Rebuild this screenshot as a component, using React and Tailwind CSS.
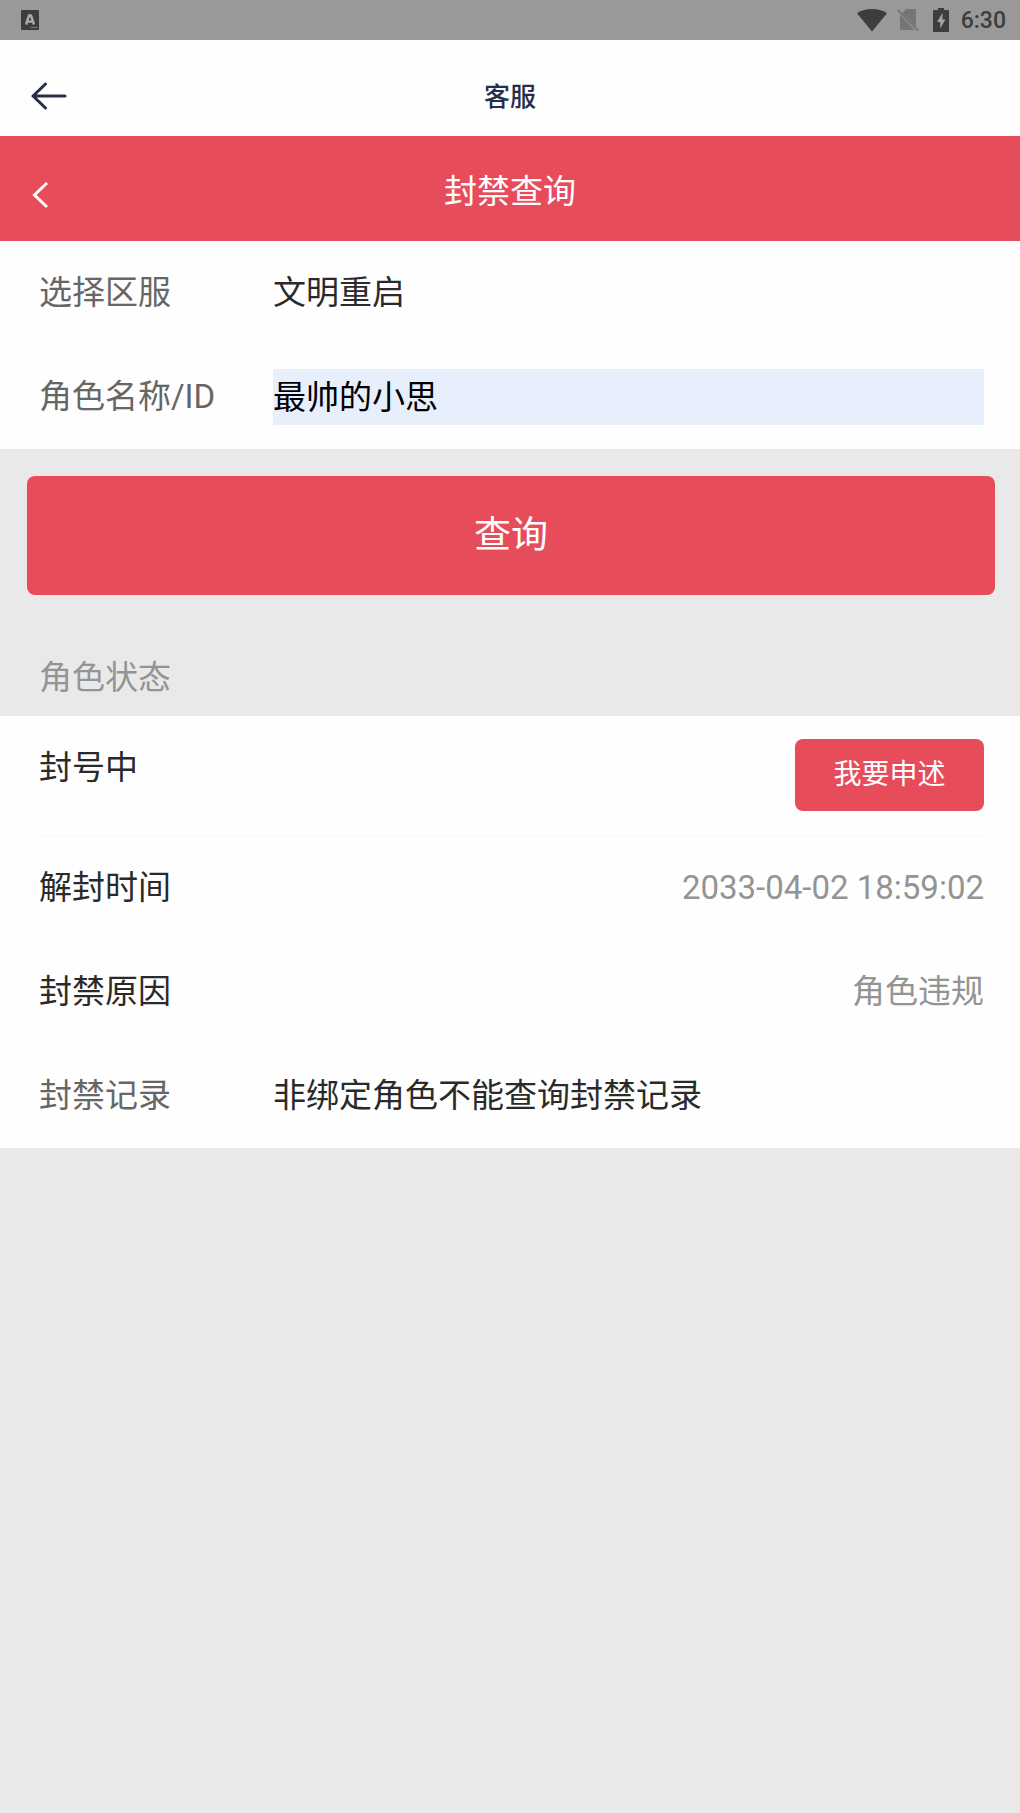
import { useState } from "react";

const baseFont = "font-[Roboto,'Noto_Sans_CJK_SC',sans-serif]";

function StatusBar() {
  return (
    <div className="flex h-10 items-center justify-between bg-[#999999] pr-3.5 pl-[21px] text-[#3d3d3d]">
      <svg width="18" height="20" viewBox="0 0 18 20" aria-hidden="true">
        <rect width="18" height="20" rx="1" fill="currentColor" />
        <path d="M5 14.5 8 5.5h2l3 9M6.2 11.6h5.6" fill="none" stroke="#aaaaaa" strokeWidth="2.4" />
        <path d="M9.5 17.5h7" stroke="#777777" strokeWidth="1" />
      </svg>
      <div className="flex items-center">
        <svg width="30" height="24" viewBox="0 0 30 24" aria-hidden="true">
          <path d="M0 5.2C8.5-.4 21.5-.4 30 5.2L15 23.5Z" fill="currentColor" />
        </svg>
        <svg className="ml-2.5" width="22" height="24" viewBox="0 0 22 24" aria-hidden="true">
          <path d="M9 1h9q1 0 1 1v16.500L5.500 5Z" fill="#757575" />
          <path d="M3 6.500V21q0 1 1 1h13.500Z" fill="#757575" />
          <path d="M1 2 21 22.500" stroke="#757575" strokeWidth="2" />
        </svg>
        <svg className="ml-3.5" width="16" height="24" viewBox="0 0 16 24" aria-hidden="true">
          <path d="M5 0h6v2h4q1 0 1 1v20q0 1-1 1H1q-1 0-1-1V3q0-1 1-1h4Z" fill="currentColor" />
          <path d="M9.5 5 4 14h3.200v6.500L12.500 11.500H9.500Z" fill="#a3a3a3" />
        </svg>
        <span className="ml-3 pt-0.5 text-[23px] leading-9 font-medium">6:30</span>
      </div>
    </div>
  );
}

function AppBar() {
  return (
    <header className="grid h-24 grid-cols-[1fr_auto_1fr] items-center bg-[#fefefe] px-[31px] pt-4">
      <button type="button" aria-label="返回" className="w-9">
        <svg width="36" height="28" viewBox="0 0 36 28" aria-hidden="true">
          <path
            d="M34 14H2M14.500 2 2 14l12.500 12"
            fill="none"
            stroke="#282d49"
            strokeWidth="3"
            strokeLinecap="round"
            strokeLinejoin="round"
          />
        </svg>
      </button>
      <h1 className="pt-0.5 text-[26px] leading-10 font-medium text-[#282d49]">客服</h1>
    </header>
  );
}

function PageTitle() {
  return (
    <div className="grid h-[105px] grid-cols-[1fr_auto_1fr] items-center bg-[#e74c5b] px-[31px] text-white">
      <button type="button" aria-label="后退" className="w-9 pt-3">
        <svg width="20" height="28" viewBox="0 0 20 28" aria-hidden="true">
          <path d="M16 2 3.500 14 16 26" fill="none" stroke="currentColor" strokeWidth="3" />
        </svg>
      </button>
      <h2 className="pt-1.5 text-[33px] leading-[48px]">封禁查询</h2>
    </div>
  );
}

function Row({ label, htmlFor, children }) {
  return (
    <div className="flex h-[104px] items-center">
      <label htmlFor={htmlFor} className="w-[234px] shrink-0 text-[#666666]">
        {label}
      </label>
      {children}
    </div>
  );
}

function StatusRow({ label, value }) {
  return (
    <div className="flex h-[104px] items-center justify-between">
      <span>{label}</span>
      <span className="text-[#949494]">{value}</span>
    </div>
  );
}

export default function App() {
  const [role, setRole] = useState("最帅的小思");

  return (
    <div className={`min-h-screen bg-[#e9e9e9] text-[33px] text-[#2a2a2a] ${baseFont}`}>
      <StatusBar />
      <AppBar />
      <PageTitle />

      <form onSubmit={(e) => e.preventDefault()}>
        <div className="bg-[#fefefe] pr-9 pl-[39px]">
          <Row label="选择区服" htmlFor="server">
            <output id="server">文明重启</output>
          </Row>
          <Row label="角色名称/ID" htmlFor="role">
            <input
              id="role"
              value={role}
              onChange={(e) => setRole(e.target.value)}
              className="h-14 min-w-0 flex-1 bg-[#e7effc] pb-1 text-black outline-none"
            />
          </Row>
        </div>

        <div className="pt-[27px] pr-[25px] pl-[27px]">
          <button
            type="submit"
            className="h-[119px] w-full rounded-lg bg-[#e74c5b] text-[37px] text-white"
          >
            查询
          </button>
        </div>
      </form>

      <h3 className="px-[39px] pt-[49px] pb-1 leading-[68px] text-[#949494]">角色状态</h3>

      <section className="bg-[#fefefe] pr-9 pl-[39px]">
        <div className="flex items-start justify-between border-b border-[#f8f8f8] pb-6">
          <span className="pt-7 leading-[48px]">封号中</span>
          <button
            type="button"
            className="mt-[23px] h-[72px] w-[189px] rounded-lg bg-[#e74c5b] text-[28px] text-white"
          >
            我要申述
          </button>
        </div>
        <StatusRow label="解封时间" value="2033-04-02 18:59:02" />
        <StatusRow label="封禁原因" value="角色违规" />
        <Row label="封禁记录">
          <span>非绑定角色不能查询封禁记录</span>
        </Row>
      </section>
    </div>
  );
}
